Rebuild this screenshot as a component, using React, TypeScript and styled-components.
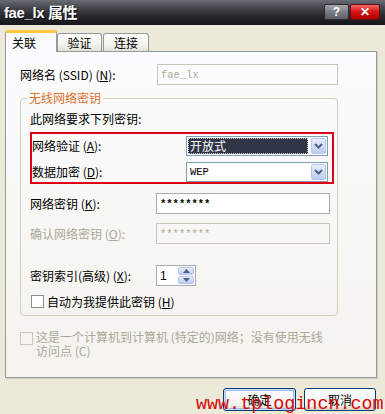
import React from "react";
import styled, { createGlobalStyle } from "styled-components";

const GlobalStyle = createGlobalStyle`
  html, body { margin: 0; padding: 0; }
  body {
    background: #ece9d8;
    font-family: "Noto Sans CJK SC", "Liberation Sans", sans-serif;
    font-size: 12px;
    color: #000;
  }
`;

const Window = styled.div`
  position: relative;
  width: 385px;
  height: 414px;
  overflow: hidden;
  background: #ece9d8;
`;

const TitleBar = styled.div`
  box-sizing: border-box;
  height: 25px;
  display: flex;
  align-items: center;
  justify-content: space-between;
  padding: 0 5px 0 4px;
  background: linear-gradient(#6a6d73, #45484e 30%, #2a2c31 60%, #141518);
`;

const TitleText = styled.div`
  font-family: "Liberation Sans", "Noto Sans CJK SC", sans-serif;
  font-weight: bold;
  font-size: 15px;
  color: #fff;
  letter-spacing: -0.4px;
  text-shadow: 1px 1px 0 #0c0c0c;
  margin-top: -2px;
`;

const CaptionButtons = styled.div`
  display: flex;
  gap: 1px;
  margin-top: -1px;
`;

const CaptionButton = styled.div<{ $close?: boolean }>`
  box-sizing: border-box;
  width: ${(p) => (p.$close ? 30 : 25)}px;
  height: 16px;
  border-radius: 2px;
  border: 1px solid ${(p) => (p.$close ? "#6a0a0a" : "#2b2d31")};
  background: ${(p) =>
    p.$close
      ? "linear-gradient(#f26a6a, #d81818 45%, #b00000)"
      : "linear-gradient(#a7aab0, #7c7f85 45%, #5c5f65)"};
  color: #fff;
  font-family: "Liberation Sans", sans-serif;
  font-weight: bold;
  font-size: 12px;
  display: flex;
  align-items: center;
  justify-content: center;
`;

const Body = styled.div`
  padding: 5px 8px 0 5px;
`;

const TabStrip = styled.div`
  display: flex;
  align-items: flex-end;
  height: 21px;
`;

const Tab = styled.div<{ $active?: boolean; $width: number; $gap?: number }>`
  box-sizing: border-box;
  position: relative;
  z-index: ${(p) => (p.$active ? 2 : 1)};
  width: ${(p) => p.$width}px;
  height: ${(p) => (p.$active ? 22 : 18)}px;
  margin-left: ${(p) => p.$gap ?? 0}px;
  margin-bottom: ${(p) => (p.$active ? -1 : 0)}px;
  border: 1px solid #919b9c;
  border-bottom: none;
  border-top: ${(p) => (p.$active ? "3px solid #ffc83c" : "1px solid #919b9c")};
  border-radius: 3px 3px 0 0;
  background: ${(p) =>
    p.$active ? "#fcfcfe" : "linear-gradient(#fefefe, #f4f3ee 60%, #e3e1d7)"};
  display: flex;
  align-items: center;
  justify-content: ${(p) => (p.$active ? "flex-start" : "center")};
  padding-left: ${(p) => (p.$active ? 6 : 0)}px;
  font-size: 12px;
  line-height: 14px;
`;

const Panel = styled.div`
  box-sizing: border-box;
  height: 327px;
  border: 1px solid #919b9c;
  background: linear-gradient(#fcfcfe, #f4f3ee);
  box-shadow: 1px 1px 0 #d2d0c2;
  padding: 12px 0 0 14px;
`;

const Row = styled.div<{ $top?: number; $height?: number }>`
  display: flex;
  align-items: center;
  height: ${(p) => p.$height ?? 21}px;
  margin-top: ${(p) => p.$top ?? 0}px;
`;

const Label = styled.div<{ $width: number; $disabled?: boolean }>`
  width: ${(p) => p.$width}px;
  flex-shrink: 0;
  white-space: nowrap;
  line-height: 14px;
  color: ${(p) => (p.$disabled ? "#aca899" : "#000")};
`;

const TextBox = styled.div<{ $width: number; $disabled?: boolean }>`
  box-sizing: border-box;
  width: ${(p) => p.$width}px;
  height: 21px;
  border: 1px solid ${(p) => (p.$disabled ? "#c9c7ba" : "#a5acb2")};
  background: ${(p) => (p.$disabled ? "transparent" : "#fff")};
  display: flex;
  align-items: center;
  padding-left: 3px;
`;

const MonoText = styled.span<{ $disabled?: boolean; $bold?: boolean }>`
  font-family: "Liberation Mono", monospace;
  font-size: 10.5px;
  font-weight: ${(p) => (p.$bold ? "bold" : "normal")};
  color: ${(p) => (p.$disabled ? "#aca899" : "#000")};
`;

const GroupBox = styled.div`
  position: relative;
  box-sizing: border-box;
  width: 318px;
  margin-top: 13px;
  border: 1px solid #d0d0bf;
  border-radius: 4px;
  padding: 13px 0 7px 9px;
`;

const GroupTitle = styled.span`
  position: absolute;
  top: -8px;
  left: 6px;
  padding: 0 2px;
  line-height: 14px;
  color: #e0702e;
  background: #fbfbfb;
`;

const Note = styled.div`
  line-height: 14px;
`;

const Highlight = styled.div`
  box-sizing: border-box;
  width: 304px;
  margin-top: 6px;
  border: 2px solid #e00014;
  padding-top: 2px;
  display: flex;
  flex-direction: column;
  gap: 6px;
`;

const Combo = styled.div`
  box-sizing: border-box;
  width: 142px;
  height: 20px;
  border: 1px solid #7f9db9;
  background: #fff;
  display: flex;
  align-items: stretch;
  padding: 1px;
  gap: 3px;
`;

const ComboValue = styled.div<{ $selected?: boolean }>`
  flex: 1;
  display: flex;
  align-items: center;
  padding-left: 2px;
  background: ${(p) => (p.$selected ? "#303547" : "transparent")};
  color: ${(p) => (p.$selected ? "#fff" : "#000")};
  outline: ${(p) => (p.$selected ? "1px dotted #c8c8c8" : "none")};
  outline-offset: -1px;
  line-height: 14px;
`;

const SpinButtonFace = styled.div`
  box-sizing: border-box;
  border: 1px solid #b4c6ec;
  border-radius: 2px;
  background: linear-gradient(#e6eefc, #bccdf2);
  display: flex;
  align-items: center;
  justify-content: center;
`;

const ComboArrow = styled(SpinButtonFace)`
  width: 15px;
`;

const Spinner = styled.div`
  box-sizing: border-box;
  width: 40px;
  height: 21px;
  border: 1px solid #a5acb2;
  background: #fff;
  display: flex;
  align-items: center;
  padding: 1px 1px 1px 3px;
`;

const SpinValue = styled.div`
  flex: 1;
  font-family: "Liberation Sans", sans-serif;
  font-size: 12px;
`;

const SpinButtons = styled.div`
  width: 16px;
  height: 17px;
  display: flex;
  flex-direction: column;
  gap: 1px;
  & > div {
    flex: 1;
  }
`;

const CheckBox = styled.div<{ $disabled?: boolean; $left?: number }>`
  box-sizing: border-box;
  width: 13px;
  height: 13px;
  flex-shrink: 0;
  margin-left: ${(p) => p.$left ?? 0}px;
  border: 1px solid ${(p) => (p.$disabled ? "#cac8bb" : "#8f8f8f")};
  background: ${(p) => (p.$disabled ? "#f4f3ee" : "#fff")};
`;

const CheckLabel = styled.div<{ $disabled?: boolean }>`
  margin-left: 3px;
  line-height: 13px;
  white-space: nowrap;
  color: ${(p) => (p.$disabled ? "#aca899" : "#000")};
`;

const AdHocRow = styled.div`
  display: flex;
  align-items: flex-start;
  margin-top: 16px;
  & > div:last-child {
    margin-top: -2px;
    line-height: 14px;
  }
`;

const ButtonRow = styled.div`
  display: flex;
  justify-content: flex-end;
  gap: 8px;
  margin-top: 10px;
  padding-right: 1px;
`;

const Button = styled.div<{ $default?: boolean; $width: number }>`
  box-sizing: border-box;
  width: ${(p) => p.$width}px;
  height: 23px;
  border: 1px solid #003c74;
  border-radius: 3px;
  background: linear-gradient(#ffffff, #f3f3ef 75%, #d8d3c8);
  box-shadow: ${(p) =>
    p.$default ? "inset 0 0 0 1px #cee0fb, inset 0 0 0 2px #9fbcf0" : "none"};
  display: flex;
  align-items: center;
  justify-content: center;
  line-height: 14px;
`;

const Watermark = styled.div`
  position: absolute;
  left: 196px;
  bottom: 0;
  font-family: "Liberation Mono", "Courier New", monospace;
  font-size: 18.4px;
  line-height: 18px;
  color: #d40a0a;
  white-space: nowrap;
  pointer-events: none;
`;

const Chevron = () => (
  <svg width="9" height="6" viewBox="0 0 9 6">
    <path d="M1 1 L4.5 4.5 L8 1" fill="none" stroke="#4d6185" strokeWidth="2" />
  </svg>
);

const Triangle = ({ up }: { up?: boolean }) => (
  <svg width="7" height="4" viewBox="0 0 7 4">
    <path d={up ? "M0 4 L3.5 0 L7 4 Z" : "M0 0 L3.5 4 L7 0 Z"} fill="#4d6185" />
  </svg>
);

const App = () => {
  return (
    <Window>
      <GlobalStyle />
      <TitleBar>
        <TitleText>fae_lx 属性</TitleText>
        <CaptionButtons>
          <CaptionButton>?</CaptionButton>
          <CaptionButton $close>✕</CaptionButton>
        </CaptionButtons>
      </TitleBar>
      <Body>
        <TabStrip>
          <Tab $active $width={52}>
            关联
          </Tab>
          <Tab $width={45}>验证</Tab>
          <Tab $width={46} $gap={1}>
            连接
          </Tab>
        </TabStrip>
        <Panel>
          <Row>
            <Label $width={137}>
              网络名 (SSID) (<u>N</u>):
            </Label>
            <TextBox $width={181} $disabled>
              <MonoText $disabled>fae_lx</MonoText>
            </TextBox>
          </Row>

          <GroupBox>
            <GroupTitle>无线网络密钥</GroupTitle>
            <Note>此网络要求下列密钥:</Note>
            <Highlight>
              <Row $height={20}>
                <Label $width={154}>
                  网络验证 (<u>A</u>):
                </Label>
                <Combo>
                  <ComboValue $selected>开放式</ComboValue>
                  <ComboArrow>
                    <Chevron />
                  </ComboArrow>
                </Combo>
              </Row>
              <Row $height={20}>
                <Label $width={154}>
                  数据加密 (<u>D</u>):
                </Label>
                <Combo>
                  <ComboValue>
                    <MonoText>WEP</MonoText>
                  </ComboValue>
                  <ComboArrow>
                    <Chevron />
                  </ComboArrow>
                </Combo>
              </Row>
            </Highlight>
            <Row $top={9}>
              <Label $width={126}>
                网络密钥 (<u>K</u>):
              </Label>
              <TextBox $width={174}>
                <MonoText $bold>********</MonoText>
              </TextBox>
            </Row>
            <Row $top={9}>
              <Label $width={126} $disabled>
                确认网络密钥 (<u>O</u>):
              </Label>
              <TextBox $width={174} $disabled>
                <MonoText $disabled>********</MonoText>
              </TextBox>
            </Row>
            <Row $top={21}>
              <Label $width={126}>
                密钥索引(高级) (<u>X</u>):
              </Label>
              <Spinner>
                <SpinValue>1</SpinValue>
                <SpinButtons>
                  <SpinButtonFace>
                    <Triangle up />
                  </SpinButtonFace>
                  <SpinButtonFace>
                    <Triangle />
                  </SpinButtonFace>
                </SpinButtons>
              </Spinner>
            </Row>
            <Row $top={9} $height={13}>
              <CheckBox $left={1} />
              <CheckLabel>
                自动为我提供此密钥 (<u>H</u>)
              </CheckLabel>
            </Row>
          </GroupBox>

          <AdHocRow>
            <CheckBox $disabled />
            <CheckLabel $disabled>
              这是一个计算机到计算机 (特定的)网络；没有使用无线
              <br />
              访问点 (C)
            </CheckLabel>
          </AdHocRow>
        </Panel>
        <ButtonRow>
          <Button $default $width={73}>
            确定
          </Button>
          <Button $width={72}>取消</Button>
        </ButtonRow>
      </Body>
      <Watermark>www.tplogincn.com</Watermark>
    </Window>
  );
};

export default App;
